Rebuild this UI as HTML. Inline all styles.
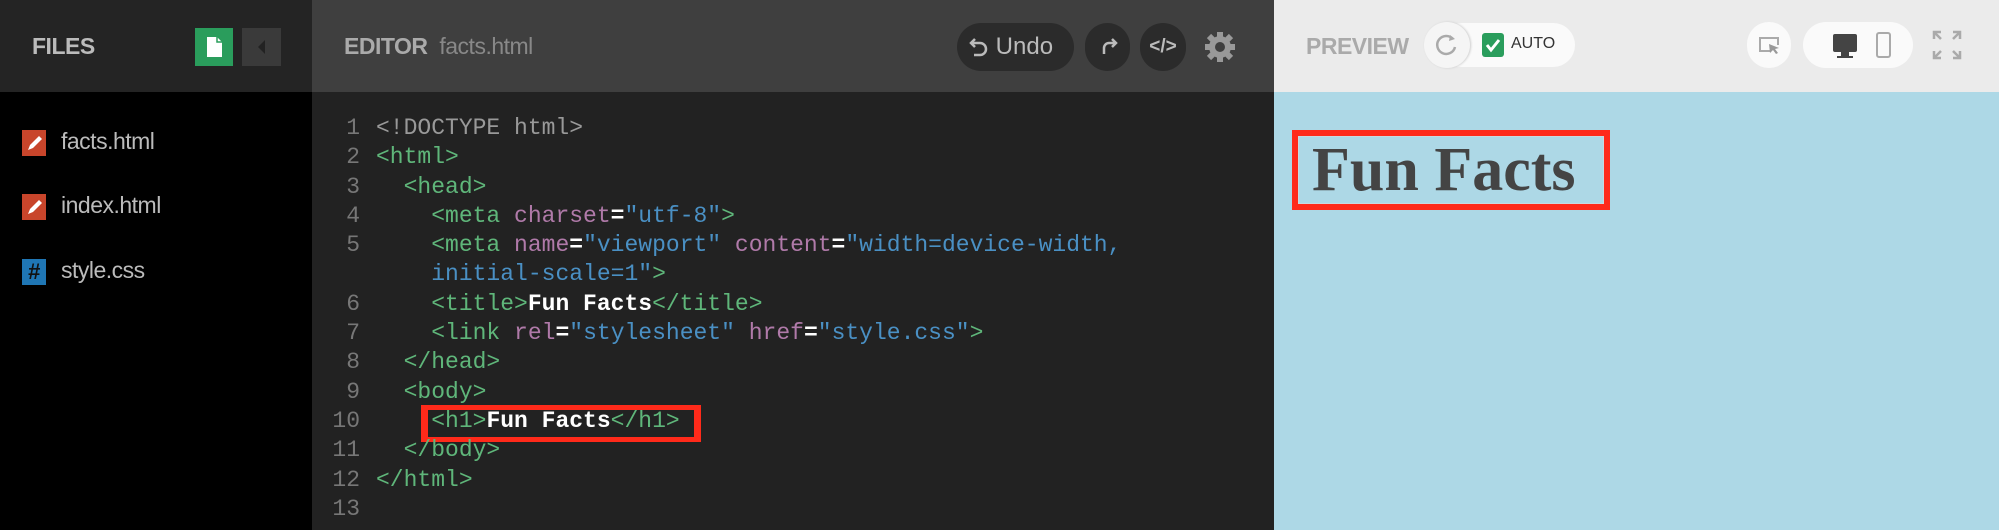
<!DOCTYPE html>
<html><head><meta charset="utf-8"><style>
*{margin:0;padding:0;box-sizing:border-box}
body{width:1999px;height:530px;overflow:hidden;position:relative;font-family:"Liberation Sans",sans-serif;background:#000}
.abs{position:absolute}
#fh{left:0;top:0;width:312px;height:92px;background:#242424}
#fb{left:0;top:92px;width:312px;height:438px;background:#000}
#eh{left:312px;top:0;width:962px;height:92px;background:#3f3f3f}
#eb{left:312px;top:92px;width:962px;height:438px;background:#222}
#ph{left:1274px;top:0;width:725px;height:92px;background:#ebebeb}
#pb{left:1274px;top:92px;width:725px;height:438px;background:#add8e6}
.ttl{font-weight:bold;font-size:23px;letter-spacing:-0.5px}
.file{left:22px;font-size:23px;color:#bbb;letter-spacing:-0.5px}
.file i{position:absolute;left:0;top:2px;width:24px;height:26px;font-style:normal}
.file span{position:absolute;left:39px;top:0;white-space:nowrap}
.code{font-family:"Liberation Mono",monospace;font-size:23px;line-height:29.3px;white-space:pre;color:#ddd}
.ln{color:#777;text-align:right;width:48px;left:312px}
.t{color:#5fb67a}.a{color:#b07aa9}.s{color:#4a90c4}.w{color:#fff;font-weight:bold}.g{color:#999}
.btn{background:#2b2b2b;border-radius:24px;top:23px;height:48px}
</style></head><body>
<div id="fh" class="abs"></div><div id="fb" class="abs"></div>
<div id="eh" class="abs"></div><div id="eb" class="abs"></div>
<div id="ph" class="abs"></div><div id="pb" class="abs"></div>

<div class="abs ttl" style="left:32px;top:33px;color:#bbb">FILES</div>
<div class="abs" style="left:195px;top:28px;width:38px;height:38px;background:#2a9d5c"><svg width="38" height="38"><path d="M12 9h10l5 5v15H12z" fill="#fff"/><path d="M22 9v5h5" fill="none" stroke="#2a9d5c" stroke-width="1.5"/></svg></div>
<div class="abs" style="left:242px;top:28px;width:39px;height:38px;background:#3a3a3a"><svg width="39" height="38"><path d="M23 12v14l-7-7z" fill="#222"/></svg></div>

<div class="abs file" style="top:128px"><i style="background:#c8452b"><svg width="24" height="26"><path d="M6 20l2-5 9-9 3 3-9 9z" fill="#fff"/></svg></i><span>facts.html</span></div>
<div class="abs file" style="top:192px"><i style="background:#c8452b"><svg width="24" height="26"><path d="M6 20l2-5 9-9 3 3-9 9z" fill="#fff"/></svg></i><span>index.html</span></div>
<div class="abs file" style="top:257px"><i style="background:#1f76b4;color:#111;font-weight:bold;font-size:22px;text-align:center;line-height:26px">#</i><span>style.css</span></div>

<div class="abs ttl" style="left:344px;top:33px;color:#aaa">EDITOR <span style="font-weight:normal;color:#888;margin-left:6px">facts.html</span></div>
<div class="abs btn" style="left:957px;width:117px;color:#bbb;font-size:24px;line-height:48px;padding-left:12px"><svg width="20" height="22" style="vertical-align:-3px"><path d="M6 4L2 8l4 4M2 8h9a6 6 0 0 1 0 12H5" fill="none" stroke="#bbb" stroke-width="2.5"/></svg> Undo</div>
<div class="abs btn" style="left:1085px;width:45px"><svg width="45" height="48"><path d="M27 16l4 4-4 4M31 20h-7a5 5 0 0 0-5 5v6" fill="none" stroke="#bbb" stroke-width="2.5"/></svg></div>
<div class="abs btn" style="left:1140px;width:46px;color:#bbb;font-size:19px;line-height:48px;text-align:center;font-weight:bold">&lt;/&gt;</div>
<div class="abs" style="left:1201px;top:28px"><svg width="38" height="38"><g fill="#999"><circle cx="19" cy="19" r="11"/><g stroke="#999" stroke-width="6"><path d="M19 4v30M4 19h30M8 8l22 22M30 8L8 30"/></g></g><circle cx="19" cy="19" r="5" fill="#3f3f3f"/></svg></div>

<div class="abs ttl" style="left:1306px;top:33px;color:#aaa">PREVIEW</div>
<div class="abs" style="left:1440px;top:23px;width:135px;height:44px;background:#fafafa;border-radius:22px"></div>
<div class="abs" style="left:1424px;top:22px;width:46px;height:46px;background:#f5f5f5;border-radius:23px;box-shadow:1px 0 2px #ccc"><svg width="46" height="46"><path d="M29 17a9 9 0 1 0 2 8" fill="none" stroke="#aaa" stroke-width="2.5"/><path d="M26 13l5 4-6 2z" fill="#aaa"/></svg></div>
<div class="abs" style="left:1482px;top:33px;width:22px;height:24px;background:#2a9d5c;border-radius:3px"><svg width="22" height="24"><path d="M5 12l4 5 8-10" fill="none" stroke="#fff" stroke-width="3"/></svg></div>
<div class="abs" style="left:1511px;top:35px;font-size:16px;color:#333">AUTO</div>
<div class="abs" style="left:1747px;top:22px;width:44px;height:46px;background:#fafafa;border-radius:22px"><svg width="44" height="46"><path d="M24 29h-11v-13h18v7" fill="none" stroke="#aaa" stroke-width="2"/><path d="M22 22l10 4-4 1 3 4-2 1-3-4-3 3z" fill="#999"/></svg></div>
<div class="abs" style="left:1803px;top:22px;width:110px;height:46px;background:#fafafa;border-radius:23px"><svg width="110" height="46"><rect x="30" y="12" width="24" height="18" rx="2" fill="#444"/><path d="M38 30h8v4h4v2H34v-2h4z" fill="#444"/><rect x="74" y="11" width="13" height="24" rx="2" fill="none" stroke="#aaa" stroke-width="2"/></svg></div>
<div class="abs" style="left:1930px;top:28px"><svg width="34" height="34"><g fill="none" stroke="#aaa" stroke-width="2.5"><path d="M4 11V4h7M4 4l7 7M23 4h7v7M30 4l-7 7M4 23v7h7M4 30l7-7M30 23v7h-7M30 30l-7-7"/></g></svg></div>

<div class="abs" style="left:1292px;top:130px;width:318px;height:80px;border:6px solid #ff2a1a"><div style="position:absolute;inset:0;border:1px solid #c9d9df"></div></div>
<div class="abs" style="left:1312px;top:135px;font-family:'Liberation Serif',serif;font-weight:bold;font-size:62px;color:#444;line-height:70px">Fun Facts</div>

<div class="abs" style="left:421px;top:405px;width:280px;height:37px;background:#ff2a1a"></div>
<div class="abs" style="left:428px;top:410px;width:266px;height:27px;background:#222"></div>

<div class="abs code ln" style="top:114px">1
2
3
4
5

6
7
8
9
10
11
12
13</div>
<div class="abs code" style="left:376px;top:114px"><span class="g">&lt;!DOCTYPE html&gt;</span>
<span class="t">&lt;html&gt;</span>
  <span class="t">&lt;head&gt;</span>
    <span class="t">&lt;meta</span> <span class="a">charset</span><span class="w">=</span><span class="s">"utf-8"</span><span class="t">&gt;</span>
    <span class="t">&lt;meta</span> <span class="a">name</span><span class="w">=</span><span class="s">"viewport"</span> <span class="a">content</span><span class="w">=</span><span class="s">"width=device-width,</span>
    <span class="s">initial-scale=1"</span><span class="t">&gt;</span>
    <span class="t">&lt;title&gt;</span><span class="w">Fun Facts</span><span class="t">&lt;/title&gt;</span>
    <span class="t">&lt;link</span> <span class="a">rel</span><span class="w">=</span><span class="s">"stylesheet"</span> <span class="a">href</span><span class="w">=</span><span class="s">"style.css"</span><span class="t">&gt;</span>
  <span class="t">&lt;/head&gt;</span>
  <span class="t">&lt;body&gt;</span>
    <span class="t">&lt;h1&gt;</span><span class="w">Fun Facts</span><span class="t">&lt;/h1&gt;</span>
  <span class="t">&lt;/body&gt;</span>
<span class="t">&lt;/html&gt;</span>
</div>
</body></html>
